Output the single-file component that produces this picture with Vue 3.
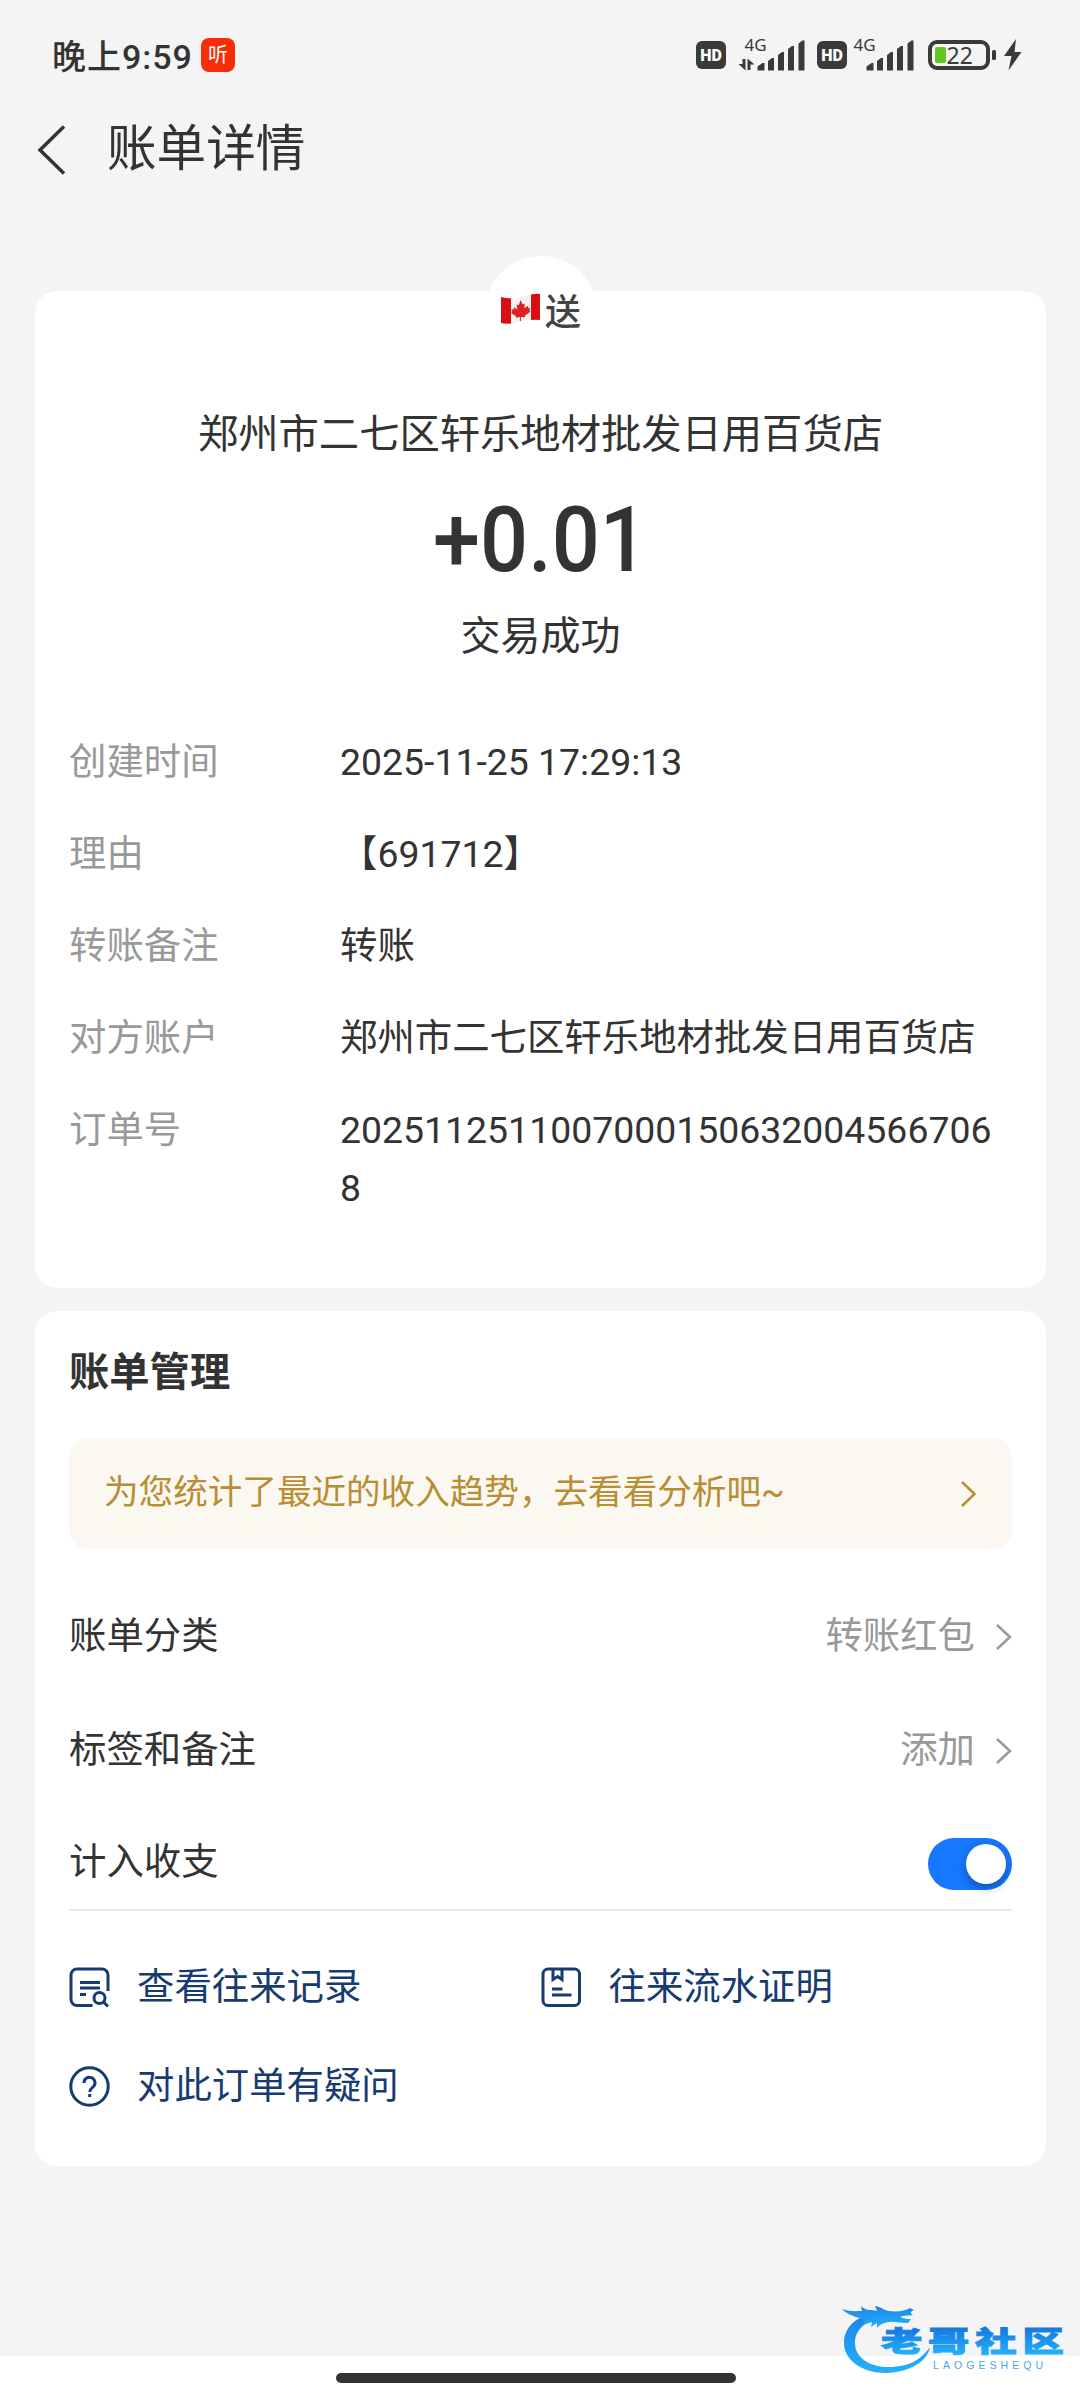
<script setup>
import { ref } from "vue";

const details = [
    { label: "创建时间", value: "2025-11-25 17:29:13" },
    { label: "理由", value: "【691712】" },
    { label: "转账备注", value: "转账" },
    { label: "对方账户", value: "郑州市二七区轩乐地材批发日用百货店" },
    { label: "订单号", value: "20251125110070001506320045667068" },
];

const counted = ref(true);
</script>

<template>
    <div class="page">
        <header class="status">
            <span class="time">晚上9:59</span>
            <span class="listen">听</span>
            <svg class="signals" width="332" height="40" viewBox="0 0 332 40">
                <g fill="#3a3a3a">
                    <rect x="0" y="6" width="30" height="28" rx="6" />
                    <rect x="121" y="6" width="30" height="28" rx="6" />
                    <!-- data arrows -->
                    <path d="M46.5 24h3v11.5L42.5 29h4zM51.5 35V23.5l7 6h-4V35z" />
                    <!-- signal bars -->
                    <path
                        id="bars"
                        d="M61.500 31.500l5-3.500h2v7.500h-7zM72 26l4-3h2v12.500h-6zM82 20l4-3h2v18.500h-6zM92 14l4-3h2v24.500h-6zM102.500 8.500l4-3h2v30h-6z"
                    />
                    <use href="#bars" x="109" />
                    <rect x="296" y="15" width="4" height="10" rx="1.500" />
                    <path d="M320 4l-12 17h7.500l-3 14.500 13-18.500h-7z" />
                </g>
                <rect x="234" y="7" width="58" height="26" rx="7" fill="none" stroke="#3a3a3a" stroke-width="4" />
                <rect x="239" y="12" width="11" height="16" rx="2" fill="#63c51f" />
                <text class="hd" x="15" y="25.500">HD</text>
                <text class="hd" x="136" y="25.500">HD</text>
                <text class="net" x="48.500" y="15.500">4G</text>
                <text class="net" x="157.500" y="15.500">4G</text>
                <text class="level" x="250.500" y="28.500">22</text>
            </svg>
        </header>

        <nav class="nav">
            <svg class="back" width="29" height="50" viewBox="0 0 29 50">
                <path d="M27 1.500L3 25l24 23.500" fill="none" stroke="#333" stroke-width="3.500" />
            </svg>
            <h1>账单详情</h1>
        </nav>

        <section class="card summary">
            <div class="avatar">
                <svg width="41" height="32" viewBox="0 0 41 32">
                    <path d="M1 4Q11 7 20 4T40 1V27Q30 26 20 29T1 30z" fill="#f3f1f1" />
                    <path d="M1 4Q6 5.500 11 5.300V30.600Q5 31 1 30zM31 1.600Q36 .3 40 1V27Q35 26.300 31 27z" fill="#d50f12" />
                    <path
                        d="M20.500 7l2.300 4.500 2-1-.5 4.500 3.500-2 .6 2 2 .5-1 2.300 1 1-5.500 4 .3 1.500-4.300-.4v4h-1v-3.800l-4.300.7.4-1.600-5-3.200 1.200-1.100-1-2 2.400-.6.4-2 3.300 2.100-.8-4.800 2.400.7z"
                        fill="#dc2024"
                    />
                </svg>
                <span>送</span>
            </div>
            <p class="merchant">郑州市二七区轩乐地材批发日用百货店</p>
            <p class="amount">+0.01</p>
            <p class="result">交易成功</p>
            <dl class="details">
                <div v-for="item in details" :key="item.label" class="detail">
                    <dt>{{ item.label }}</dt>
                    <dd>{{ item.value }}</dd>
                </div>
            </dl>
        </section>

        <section class="card manage">
            <h2>账单管理</h2>
            <div class="banner">
                <span>为您统计了最近的收入趋势，去看看分析吧~</span>
                <svg width="17" height="28" viewBox="0 0 17 28">
                    <path d="M2 2l12.500 12L2 26" fill="none" stroke="#b98d32" stroke-width="2.500" />
                </svg>
            </div>
            <div class="row">
                <span>账单分类</span>
                <span class="value">转账红包</span>
                <svg width="17" height="28" viewBox="0 0 17 28">
                    <path d="M2 2l13 12L2 26" fill="none" stroke="#999" stroke-width="2.500" />
                </svg>
            </div>
            <div class="row">
                <span>标签和备注</span>
                <span class="value">添加</span>
                <svg width="17" height="28" viewBox="0 0 17 28">
                    <path d="M2 2l13 12L2 26" fill="none" stroke="#999" stroke-width="2.500" />
                </svg>
            </div>
            <div class="row last">
                <span>计入收支</span>
                <button class="switch" :class="{ on: counted }" @click="counted = !counted"></button>
            </div>
            <div class="links">
                <a class="link">
                    <svg width="41" height="41" viewBox="0 0 41 41">
                        <path d="M23.500 38.500H8a6 6 0 0 1-6-6V8a6 6 0 0 1 6-6h25a6 6 0 0 1 6 6v16M11 15.500h20M11 21h20M11 27.500h6" />
                        <circle cx="30.500" cy="31" r="5.500" />
                        <path d="M34.500 35l4.500 4.500" />
                    </svg>
                    查看往来记录
                </a>
                <a class="link">
                    <svg width="41" height="41" viewBox="0 0 41 41">
                        <rect x="2" y="2" width="36.500" height="36.500" rx="5" />
                        <path d="M12 2.500v10l4.700-3 4.300 3v-10M11 22h10.500M11 28h19.500" />
                    </svg>
                    往来流水证明
                </a>
                <a class="link">
                    <svg width="41" height="41" viewBox="0 0 41 41">
                        <circle cx="20.500" cy="20.500" r="18.700" />
                        <path d="M15 17a5.500 5.500 0 1 1 9.500 3.500c-2 2-3.800 2.500-3.800 5.500M20.700 28v3" />
                    </svg>
                    对此订单有疑问
                </a>
            </div>
        </section>

        <footer class="home">
            <span class="bar"></span>
        </footer>

        <svg class="watermark" width="240" height="80" viewBox="0 0 240 80">
            <defs>
                <linearGradient id="ring" x1="0" y1="0" x2="0" y2="1">
                    <stop offset="0" stop-color="#1b86ea" />
                    <stop offset="1" stop-color="#25b0fb" />
                </linearGradient>
                <linearGradient id="word" gradientUnits="userSpaceOnUse" x1="0" y1="-26" x2="0" y2="3">
                    <stop offset="0" stop-color="#1573de" />
                    <stop offset="1" stop-color="#22b0fa" />
                </linearGradient>
            </defs>
            <g fill="url(#ring)">
                <path d="M40 17C20 16 4 28 4 46c0 17 18 30 42 30 24-1 41-11 44-26C82 62 70 69 52 70 32 71 15 62 15 46c0-14 11-21 25-27z" />
                <path d="M2 12c8 3 14 2 20 2l-1-5c6 6 11 3 16 5l-2-5c7 1 10 5 14 5 9 1 16 0 21-3l4 2c-4 2-4 3-1 5-6 1-9 0-13 2 4 2 8 2 11 2l-3 4c-8 0-14-2-19-1-7 1-9 3-12 6v-5l-6 4 1-5-9 3 3-6-7-1c-6-2-12-4-17-9z" />
            </g>
            <g transform="translate(41 54.500) scale(1.45 1)">
                <text class="word" x="0" y="0" textLength="126" fill="url(#word)" stroke="url(#word)">老哥社区</text>
            </g>
            <text class="latin" x="93" y="71.500" textLength="110">LAOGESHEQU</text>
        </svg>
    </div>
</template>

<style>
    body {
        background: #fff;
    }
</style>

<style scoped>
    .page {
        position: relative;
        display: flex;
        flex-direction: column;
        width: 1080px;
        height: 2400px;
        overflow: hidden;
        background: #f4f4f4;
        color: #333;
        font-family: Roboto, "Noto Sans CJK SC", sans-serif;
        font-size: 37.4px;
    }
    h1,
    h2,
    p,
    dl,
    dd {
        margin: 0;
        font-weight: 400;
    }
    svg {
        flex: none;
        overflow: visible;
    }

    .status {
        display: flex;
        align-items: center;
        height: 110px;
        padding: 0 52px;
    }
    .time {
        width: 149px;
        padding-bottom: 2px;
        font-size: 34px;
        font-weight: 500;
        letter-spacing: 1px;
        white-space: nowrap;
    }
    .listen {
        width: 34px;
        height: 34px;
        border-radius: 8px;
        background: #f72c08;
        color: #fff;
        font-size: 20px;
        line-height: 34px;
        text-align: center;
    }
    .signals {
        margin-left: auto;
    }
    .hd {
        fill: #fff;
        font-size: 16px;
        font-weight: 900;
        text-anchor: middle;
    }
    .net {
        fill: #3a3a3a;
        font-family: "Noto Sans", sans-serif;
        font-size: 17px;
    }
    .level {
        fill: #3a3a3a;
        font-family: "Noto Sans", sans-serif;
        font-size: 23px;
    }

    .nav {
        display: flex;
        align-items: center;
        gap: 41px;
        height: 79px;
        padding-left: 37px;
    }
    .nav h1 {
        font-size: 49.6px;
        line-height: 79px;
    }

    .card {
        margin: 0 34px 0 35px;
        padding: 0 34px;
        border-radius: 22px;
        background: #fff;
    }
    .summary {
        display: flex;
        flex-direction: column;
        align-items: center;
        height: 997px;
        margin-top: 102px;
    }
    .avatar {
        display: flex;
        align-items: center;
        justify-content: center;
        gap: 4px;
        flex: none;
        width: 112px;
        height: 112px;
        margin-top: -35px;
        padding-bottom: 6px;
        box-sizing: border-box;
        border-radius: 50%;
        background: #fff;
        color: #444;
        font-size: 36px;
        font-weight: 500;
    }
    .merchant {
        margin-top: 37px;
        font-size: 40.3px;
        line-height: 60px;
    }
    .amount {
        margin-top: 23px;
        font-size: 91px;
        font-weight: 500;
        line-height: 104px;
        transform: scaleX(0.93);
    }
    .result {
        margin-top: 15px;
        font-size: 40px;
        line-height: 60px;
    }
    .details {
        display: flex;
        flex-direction: column;
        gap: 34px;
        width: 100%;
        margin-top: 66px;
        line-height: 58px;
    }
    .detail {
        display: flex;
    }
    .detail dt {
        flex: none;
        width: 271px;
        color: #999;
    }
    .detail dd {
        word-break: break-all;
    }

    .manage {
        height: 855px;
        margin-top: 23px;
    }
    .manage h2 {
        padding-top: 32px;
        font-size: 40.3px;
        font-weight: 700;
        line-height: 60px;
    }
    .banner {
        display: flex;
        align-items: center;
        justify-content: space-between;
        height: 111px;
        margin-top: 35px;
        padding: 0 35px;
        border-radius: 20px;
        background: #fbf8f1;
        color: #b98d32;
        font-size: 34.6px;
    }
    .banner span {
        padding-bottom: 9px;
    }
    .row {
        display: flex;
        align-items: center;
        height: 114px;
    }
    .row span {
        padding-bottom: 8px;
    }
    .banner + .row {
        margin-top: 31px;
    }
    .row .value {
        margin-left: auto;
        margin-right: 20px;
        color: #999;
    }
    .row.last {
        justify-content: space-between;
        height: 103px;
        padding-top: 8px;
        box-sizing: border-box;
        border-bottom: 2px solid #e9e9e9;
    }
    .switch {
        display: flex;
        align-items: center;
        width: 84px;
        height: 52px;
        margin-top: 2px;
        padding: 0 6px;
        border: 0;
        border-radius: 26px;
        background: #ddd;
    }
    .switch.on {
        justify-content: flex-end;
        background: #1677ff;
    }
    .switch::before {
        content: "";
        width: 40px;
        height: 40px;
        border-radius: 50%;
        background: #fff;
        box-shadow: 0 4px 10px rgba(0, 0, 0, 0.3);
    }

    .links {
        display: grid;
        grid-template-columns: 1fr 1fr;
        row-gap: 39px;
        padding-top: 46px;
        color: #173b70;
        line-height: 60px;
    }
    .link {
        display: flex;
        align-items: center;
        gap: 27px;
    }
    .link svg {
        fill: none;
        stroke: currentColor;
        stroke-width: 3;
    }

    .home {
        display: flex;
        justify-content: center;
        height: 27px;
        margin-top: auto;
        padding: 17px 8px 0 0;
        background: #fff;
    }
    .bar {
        width: 400px;
        height: 10px;
        border-radius: 5px;
        background: #333;
    }

    .watermark {
        position: absolute;
        left: 840px;
        top: 2297px;
    }
    .word {
        font-family: "Noto Sans CJK SC", sans-serif;
        font-size: 28.5px;
        font-weight: 900;
        stroke-width: 1;
    }
    .latin {
        fill: #46a8ee;
        font-family: "Liberation Sans", sans-serif;
        font-size: 10.5px;
    }
</style>
